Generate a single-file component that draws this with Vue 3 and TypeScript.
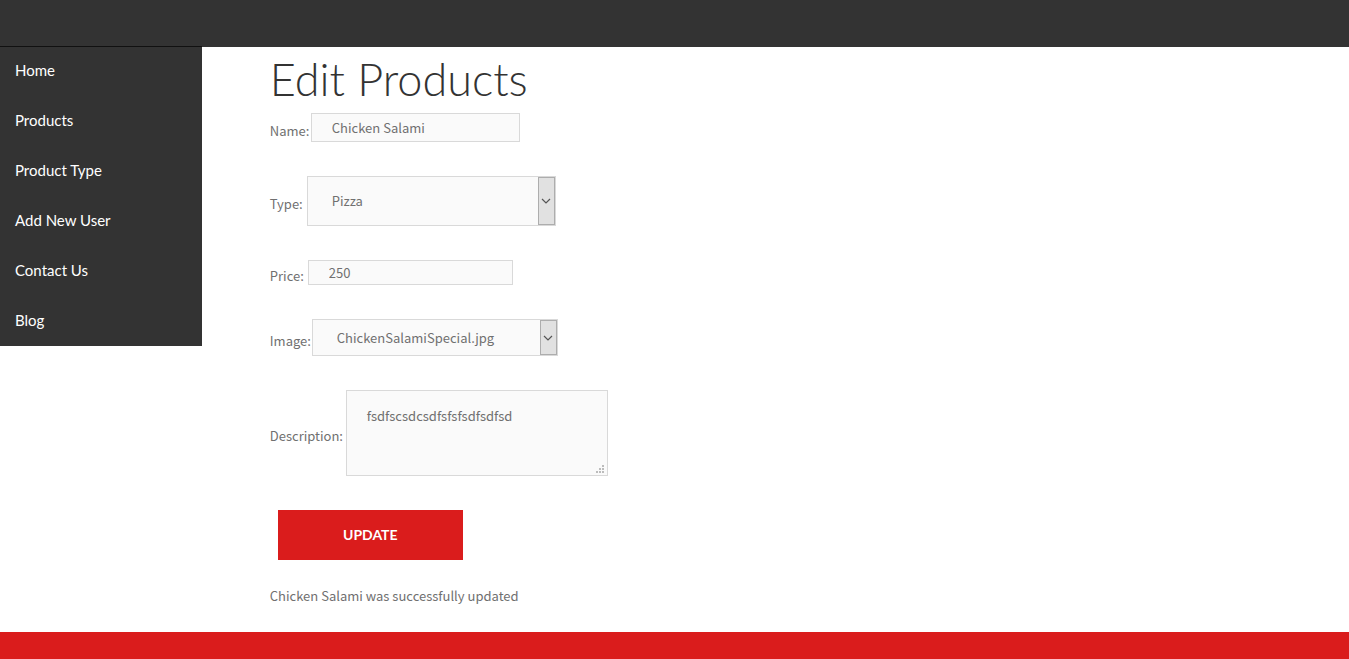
<script setup lang="ts">
import { ref } from 'vue'

const links: string[] = ['Home', 'Products', 'Product Type', 'Add New User', 'Contact Us', 'Blog']

const name = ref('Chicken Salami')
const type = ref('Pizza')
const price = ref('250')
const image = ref('ChickenSalamiSpecial.jpg')
const description = ref('fsdfscsdcsdfsfsfsdfsdfsd')
const message = ref('Chicken Salami was successfully updated')

function update(): void {
  message.value = `${name.value} was successfully updated`
}
</script>

<template>
  <div class="page">
    <header class="topbar"></header>
    <div class="body">
      <nav class="sidebar">
        <ul>
          <li v-for="link in links" :key="link"><a href="#">{{ link }}</a></li>
        </ul>
      </nav>
      <main class="content">
        <h1>Edit Products</h1>
        <form @submit.prevent="update">
          <div class="row row-name">
            <label for="name">Name:</label>
            <input id="name" v-model="name" type="text" />
          </div>
          <div class="row row-type">
            <label for="type">Type:</label>
            <span class="picker">
              <select id="type" v-model="type">
                <option>Pizza</option>
              </select>
              <span class="arrow">
                <svg width="10" height="6" viewBox="0 0 10 6" aria-hidden="true"><path d="M1 1L5 5L9 1" /></svg>
              </span>
            </span>
          </div>
          <div class="row row-price">
            <label for="price">Price:</label>
            <input id="price" v-model="price" type="text" />
          </div>
          <div class="row row-image">
            <label for="image">Image:</label>
            <span class="picker">
              <select id="image" v-model="image">
                <option>ChickenSalamiSpecial.jpg</option>
              </select>
              <span class="arrow">
                <svg width="10" height="6" viewBox="0 0 10 6" aria-hidden="true"><path d="M1 1L5 5L9 1" /></svg>
              </span>
            </span>
          </div>
          <div class="row row-description">
            <label for="description">Description:</label>
            <span class="picker">
              <textarea id="description" v-model="description"></textarea>
              <svg class="grip" width="8" height="8" viewBox="0 0 8 8" aria-hidden="true">
                <path d="M6 0h2v2h-2zM3 3h2v2h-2zM6 3h2v2h-2zM0 6h2v2h-2zM3 6h2v2h-2zM6 6h2v2h-2z" />
              </svg>
            </span>
          </div>
          <button type="submit">UPDATE</button>
        </form>
        <p class="message">{{ message }}</p>
      </main>
    </div>
    <footer class="footer"></footer>
  </div>
</template>

<style>
body {
  margin: 0;
  background: #fff;
}
</style>

<style scoped>
.page {
  display: flex;
  flex-direction: column;
  min-height: 100vh;
  color: #707070;
  font: 13px/20px "Noto Sans CJK SC", "Open Sans", sans-serif;
}
.page *,
.page {
  box-sizing: border-box;
}
.topbar {
  height: 47px;
  background: #333;
}
.body {
  display: flex;
  align-items: flex-start;
}
.sidebar {
  width: 15%;
  margin-top: -1px;
  background: #333;
  border-top: 1px solid #111;
}
.sidebar ul {
  margin: 0;
  padding: 0;
  list-style: none;
}
.sidebar li {
  height: 50px;
}
.sidebar li:last-child {
  height: 49px;
}
.sidebar a {
  display: block;
  padding: 13px 15px;
  color: #fff;
  font: 15px/20px Lato, sans-serif;
  text-decoration: none;
}
.content {
  flex: 1;
  margin-left: 5%;
  padding-bottom: 26px;
}
h1 {
  margin: 0;
  padding: 7px 0 9px;
  color: #333;
  font: 300 45px/50px Lato, sans-serif;
}
form {
  display: flex;
  flex-direction: column;
  align-items: flex-start;
  gap: 34px;
}
.row {
  display: flex;
  align-items: center;
}
label {
  padding-top: 5px;
  line-height: 19px;
}
.row-name label { width: 41px; }
.row-type label { width: 37px; }
.row-price label { width: 38px; }
.row-image label { width: 42px; }
.row-description label { width: 76px; }
input,
select,
textarea {
  display: block;
  margin: 0;
  padding: 0 20px;
  border: 1px solid #d9d9d9;
  border-radius: 0;
  background: #fafafa;
  color: #707070;
  font: inherit;
  outline: none;
}
select {
  appearance: none;
  padding: 0 24px;
}
.row-name input {
  width: 209px;
  height: 29px;
}
.row-price input {
  width: 205px;
  height: 25px;
}
.row-type select {
  width: 249px;
  height: 50px;
}
.row-image select {
  width: 246px;
  height: 37px;
}
textarea {
  width: 262px;
  height: 86px;
  padding: 15px 20px;
  resize: none;
}
.picker {
  position: relative;
}
.arrow {
  position: absolute;
  top: 1px;
  right: 1px;
  bottom: 1px;
  display: flex;
  align-items: center;
  justify-content: center;
  width: 17px;
  border: 1px solid #adadad;
  background: #e1e1e1;
  pointer-events: none;
}
.arrow path {
  fill: none;
  stroke: #555;
  stroke-width: 1.2;
}
.grip {
  position: absolute;
  right: 4px;
  bottom: 3px;
  fill: #bcbcbc;
  pointer-events: none;
}
button {
  width: 185px;
  height: 50px;
  margin-left: 8px;
  padding: 0;
  border: 0;
  background: #da1c1c;
  color: #fff;
  font: 700 14px/20px Lato, sans-serif;
}
.message {
  margin: 26px 0 0;
}
.footer {
  flex: 1;
  min-height: 27px;
  background: #da1c1c;
}
</style>
